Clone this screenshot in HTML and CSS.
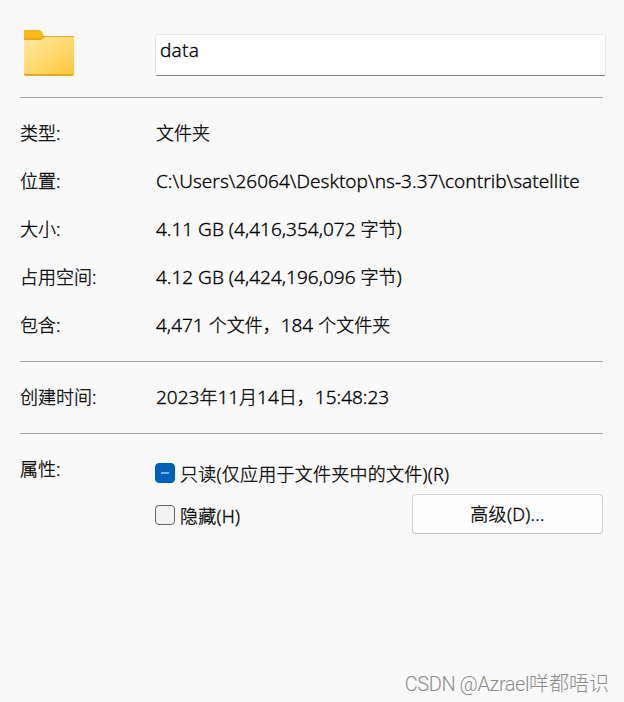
FILE: index.html
```
<!DOCTYPE html>
<html lang="zh-CN">
<head>
  <meta charset="UTF-8" />
  <meta name="viewport" content="width=device-width, initial-scale=1" />
  <title>data 属性</title>
  <link rel="stylesheet" href="styles.css">
</head>
<body>
  <div class="container">
    <div class="header">
      <svg class="folder" width="52" height="48" viewBox="0 0 52 48">
        <defs>
          <linearGradient id="front" x1="0" y1="0" x2="1" y2="1">
            <stop offset="0" stop-color="#ffe9a6" />
            <stop offset="1" stop-color="#ffc83a" />
          </linearGradient>
        </defs>
        <path d="M1 1q0-1 1-1h14q2 0 3 2l2 4v4H1z" fill="#fab919" />
        <path d="M1 11V8h17l3-2h29q1 0 1 1v4z" fill="#e9a820" />
        <path d="M1 38h50v6q0 2-2 2H3q-2 0-2-2z" fill="#e8a923" />
        <path d="M1 11q0-1 1-1h15q2 0 3-1.500T23 7h27q1 0 1 1v35q0 1-1 1H2q-1 0-1-1z" fill="url(#front)" />
      </svg>
      <input type="text" class="name" value="data" />
    </div>

    <div class="section">
      <div class="row">
        <span class="label">类型:</span>
        <span class="value"><span class="zh">文件夹</span></span>
      </div>
      <div class="row">
        <span class="label">位置:</span>
        <span class="value path">C:\Users\26064\Desktop\ns-3.37\contrib\satellite</span>
      </div>
      <div class="row">
        <span class="label">大小:</span>
        <span class="value">4.11 GB (4,416,354,072 <span class="zh">字节</span>)</span>
      </div>
      <div class="row">
        <span class="label">占用空间:</span>
        <span class="value">4.12 GB (4,424,196,096 <span class="zh">字节</span>)</span>
      </div>
      <div class="row">
        <span class="label">包含:</span>
        <span class="value">4,471 <span class="zh">个文件，</span>184 <span class="zh">个文件夹</span></span>
      </div>
    </div>

    <div class="section">
      <div class="row">
        <span class="label">创建时间:</span>
        <span class="value">2023<span class="zh">年</span>11<span class="zh">月</span>14<span class="zh">日，</span>15:48:23</span>
      </div>
    </div>

    <div class="section attributes">
      <span class="label">属性:</span>
      <div class="options">
        <label class="option">
          <span class="checkbox mixed"></span>
          <span class="text">只读(仅应用于文件夹中的文件)(R)</span>
        </label>
        <div class="option-line">
          <label class="option">
            <span class="checkbox"></span>
            <span class="text">隐藏(H)</span>
          </label>
          <button class="advanced-btn">高级(D)...</button>
        </div>
      </div>
    </div>

    <div class="watermark"><span class="site">CSDN @Azrael</span>咩都唔识</div>
  </div>
</body>
</html>
```
FILE: styles.css
```
body {
  margin: 0;
  background-color: #f9f9f9;
  color: #000;
  font-family: "Noto Sans", "Noto Sans CJK SC", sans-serif;
  font-size: 18px;
  font-weight: 300;
  -webkit-text-stroke: 0.3px #000;
}
.container {
  box-sizing: border-box;
  height: 702px;
  padding: 30px 21px 0 20px;
  display: flex;
  flex-direction: column;
}
.header {
  display: flex;
  height: 67px;
  margin-right: -3px;
}
.folder {
  margin-left: 3px;
  flex: none;
}
.name {
  box-sizing: border-box;
  width: 451px;
  height: 42px;
  margin: 4px 0 0 auto;
  padding: 0 5px 10px 4px;
  border: 1px solid #e8e8e8;
  border-bottom-color: #868686;
  border-radius: 2px;
  background-color: #fff;
  color: #000;
  font: inherit;
  font-size: 19px;
  letter-spacing: 0.2px;
  outline: none;
}
.section {
  padding: 10px 0 13px;
  border-top: 1px solid #a0a0a0;
}
.row {
  display: flex;
  align-items: center;
  height: 48px;
  white-space: nowrap;
}
.label {
  width: 136px;
  flex: none;
}
.value {
  font-size: 19px;
}
.zh {
  font-size: 18px;
}
.path {
  padding-top: 1px;
  letter-spacing: 0.03px;
}
.attributes {
  display: flex;
  padding: 0;
}
.attributes .label {
  line-height: 24px;
  padding-top: 23px;
}
.options {
  flex: 1;
  padding-top: 18px;
}
.option {
  display: flex;
  align-items: center;
  gap: 5px;
  height: 42px;
  margin-left: -1px;
  white-space: nowrap;
}
.text {
  letter-spacing: 0.25px;
  padding-bottom: 1px;
}
.option-line {
  display: flex;
  justify-content: space-between;
}
.checkbox {
  box-sizing: border-box;
  width: 20px;
  height: 20px;
  border: 1px solid #666;
  border-radius: 4px;
  background-color: #f3f3f3;
}
.mixed {
  display: flex;
  align-items: center;
  justify-content: center;
  border-color: #005fb8;
  background-color: #005fb8;
}
.mixed::after {
  content: "";
  width: 8px;
  height: 2px;
  background-color: #7fafdb;
}
.advanced-btn {
  width: 191px;
  height: 40px;
  padding: 0 0 2px;
  border: 1px solid #d0d0d0;
  border-bottom-color: #bcbcbc;
  border-radius: 4px;
  background-color: #fdfdfd;
  color: #000;
  font: inherit;
  letter-spacing: 0.3px;
}
.watermark {
  margin: auto -6px 4px auto;
  color: #8c8c8c;
  font-family: Roboto, "Noto Sans CJK SC", sans-serif;
  font-size: 20px;
  line-height: 28px;
  -webkit-text-stroke: 0;
}
.site {
  letter-spacing: -0.45px;
}
```
